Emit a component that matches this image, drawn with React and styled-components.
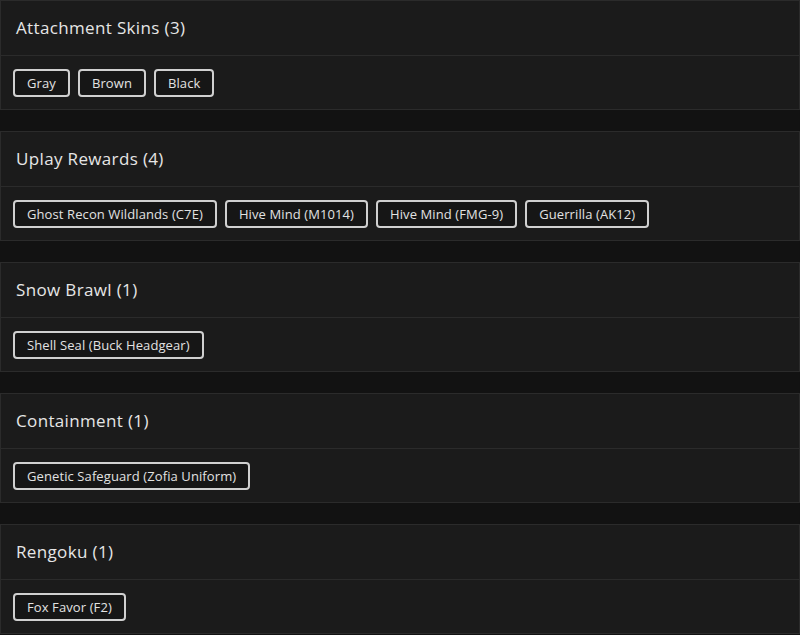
import React from "react";
import styled, { createGlobalStyle } from "styled-components";

const Global = createGlobalStyle`
  body {
    margin: 0;
    background: #121212;
    font-family: "Open Sans", "Liberation Sans", sans-serif;
  }
`;

const List = styled.div`
  display: flex;
  flex-direction: column;
  gap: 21px;
`;

const Card = styled.section`
  background: #1b1b1b;
  border: 1px solid #2b2b2b;
`;

const Header = styled.div`
  height: 55px;
  display: flex;
  align-items: center;
  padding: 0 15px 2px;
  box-sizing: border-box;
  border-bottom: 1px solid #2b2b2b;
  color: #e6e6e6;
  font-size: 17px;
  font-weight: 500;
  letter-spacing: 0.35px;
`;

const Body = styled.div`
  display: flex;
  flex-wrap: wrap;
  gap: 8px;
  padding: 13px 12px 12px;
`;

const Tag = styled.button`
  height: 28px;
  padding: 0 12px;
  border: 2px solid #d0d0d0;
  border-radius: 4px;
  background: #161616;
  color: #e2e2e2;
  font-family: inherit;
  font-size: 13px;
  letter-spacing: 0.1px;
  cursor: pointer;
`;

const groups = [
  { title: "Attachment Skins", items: ["Gray", "Brown", "Black"] },
  {
    title: "Uplay Rewards",
    items: ["Ghost Recon Wildlands (C7E)", "Hive Mind (M1014)", "Hive Mind (FMG-9)", "Guerrilla (AK12)"],
  },
  { title: "Snow Brawl", items: ["Shell Seal (Buck Headgear)"] },
  { title: "Containment", items: ["Genetic Safeguard (Zofia Uniform)"] },
  { title: "Rengoku", items: ["Fox Favor (F2)"] },
];

export default function App() {
  return (
    <>
      <Global />
      <List>
        {groups.map((g) => (
          <Card key={g.title}>
            <Header>
              {g.title} ({g.items.length})
            </Header>
            <Body>
              {g.items.map((it) => (
                <Tag key={it}>{it}</Tag>
              ))}
            </Body>
          </Card>
        ))}
      </List>
    </>
  );
}
